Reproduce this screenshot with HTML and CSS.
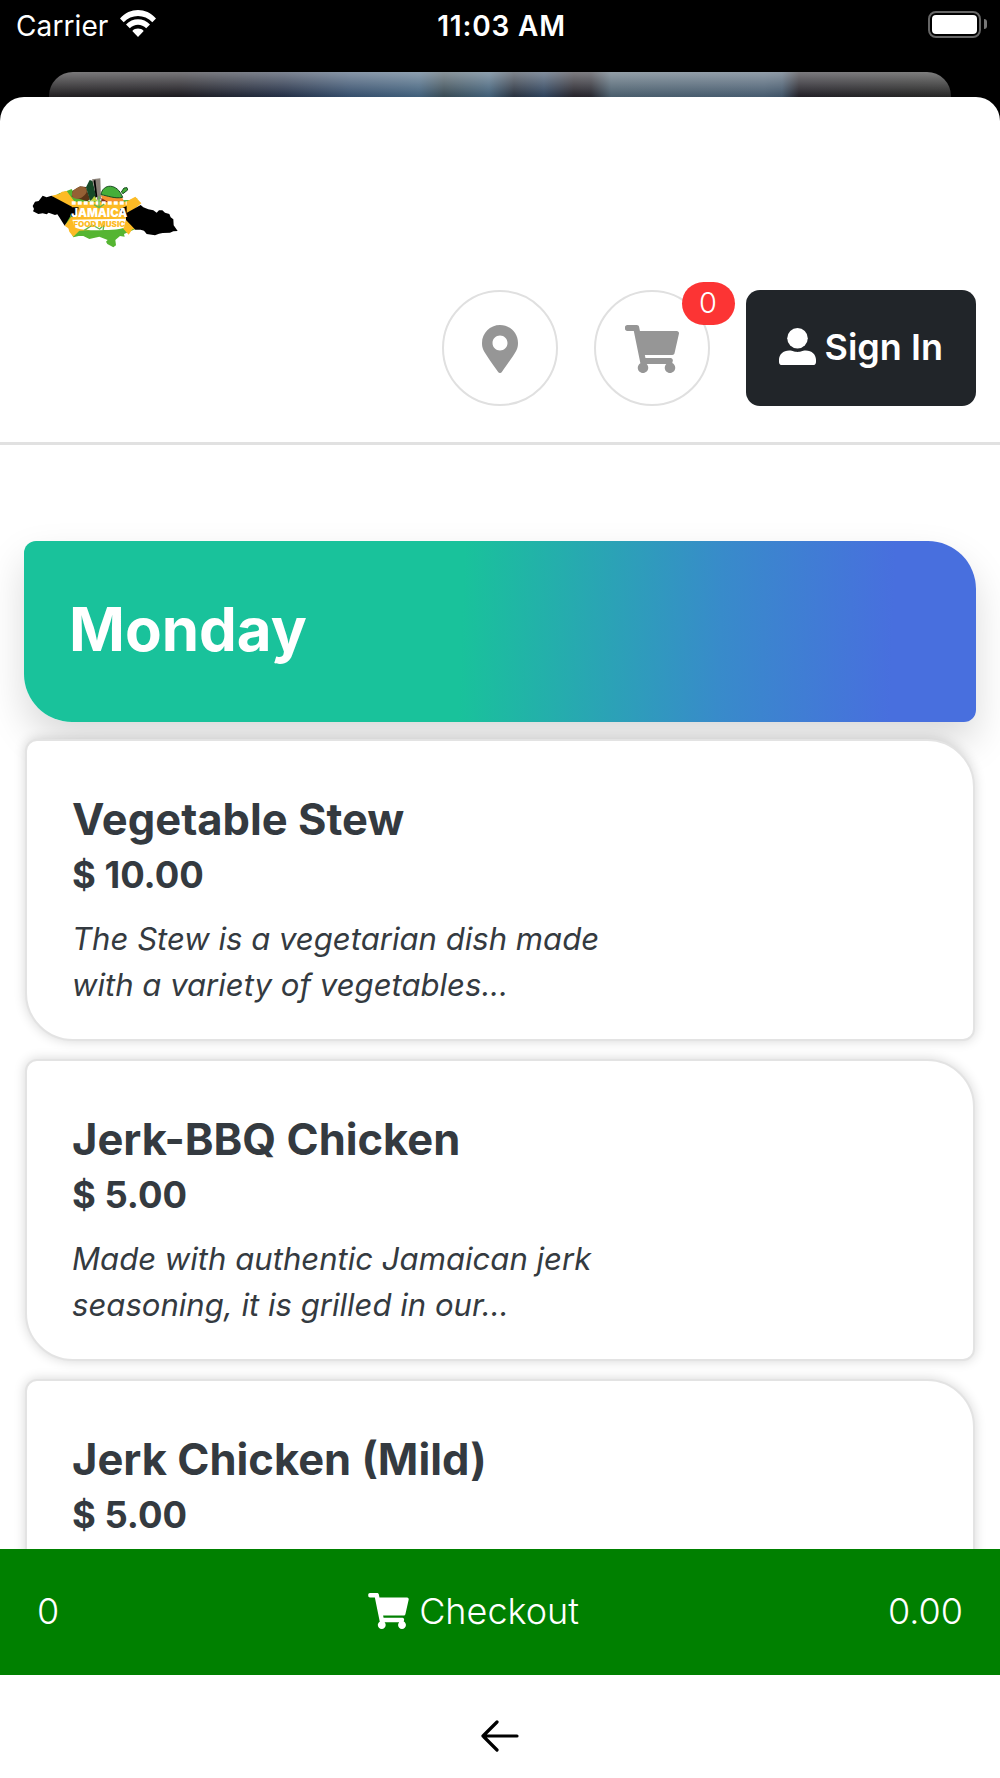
FILE: index.html
```html
<!DOCTYPE html>
<html lang="en"><head>

<meta charset="utf-8">
<title>Monday Menu</title>

<link rel="stylesheet" href="styles.css">

</head><body>

<!-- shared cart icon -->
<svg class="defs" width="0" height="0">
  <symbol id="cart" viewBox="0 0 576 512">
    <path d="M528.1 301.3l47.3-208C578.800 78.300 567.400 64 552 64H159.200l-9.200-44.800C147.800 8 137.900 0 126.500 0H24C10.700 0 0 10.700 0 24v16c0 13.300 10.700 24 24 24h69.900l70.200 343.400C147.300 417.100 136 435.200 136 456c0 30.900 25.100 56 56 56s56-25.100 56-56c0-15.700-6.400-29.800-16.800-40h209.600C430.400 426.200 424 440.300 424 456c0 30.900 25.100 56 56 56s56-25.100 56-56c0-22.200-12.900-41.300-31.600-50.400l5.500-24.300c3.400-15-8-29.300-23.400-29.300H218.100l-6.500-32h293.100c11.200 0 20.900-7.800 23.400-18.700z"/>
  </symbol>
</svg>

<div class="status">
  <div class="carrier">
    <span>Carrier</span>
    <svg class="wifi" viewBox="0 0 36 27">
      <path d="M0 8.500C10-2.800 26-2.800 36 8.500L32.300 12.300C24.500 4 11.500 4 3.700 12.300Z"/>
      <path d="M6 14.500C12.500 7.500 23.500 7.500 30 14.500L26.200 18.300C21.700 13.600 14.300 13.600 9.800 18.300Z"/>
      <path d="M12.300 21C15.200 17.800 20.800 17.800 23.700 21L18 27Z"/>
    </svg>
  </div>
  <div class="time">11:03 AM</div>
  <div class="power">
    <div class="battery"></div>
    <div class="battery-cap"></div>
  </div>
</div>

<div class="behind"></div>

<div class="sheet">
  <header>
    <svg class="logo" viewBox="30 45 450 225">
      <path class="green" d="M97 112L118 100L140 93L155 87L162 100L205 122L330 120L352 115L340 150L345 208L312 222L314 230L300 228L286 240L288 256L280 262L262 252L258 245L263 240L238 230L208 237L190 228L176 228L160 232L148 208Z"/>
      <path class="gold" d="M95 107L118 102L126 95L140 93L164 125L318 125L346 110L364 130L322 165L353 207L337 208L326 224L308 204L178 212L160 230L148 215L145 205L134 197L158 165Z"/>
      <path d="M38 138L45 125L56 123L68 107L80 112L94 107L156 140L150 170L134 197L118 172L112 163L105 165L86 158L80 163L68 160L55 162L39 154L42 147Z"/>
      <path d="M362 135L370 142L385 148L400 151L410 158L417 151L427 151L435 158L448 162L452 172L460 178L461 196L473 213L460 214L450 218L428 219L417 221L405 226L380 222L372 212L362 209L346 209L318 180L318 160Z"/>
      <path class="brown" d="M155 110L158 92L180 79L198 81L210 118L202 124Z"/>
      <ellipse class="drum" cx="178" cy="98" rx="24" ry="16" transform="rotate(-28 178 98)"/>
      <path class="dark-green" d="M198 82L209 60L218 63L229 112L210 122Z"/>
      <path class="stone" d="M216 58L241 55L243 118L232 120Z"/>
      <path d="M221 62L226 59L232 110L227 112Z"/>
      <path class="orange" d="M242 106L306 112L312 124L252 128Z"/>
      <path class="leaf" d="M243 104C248 70 292 68 308 112C285 117 262 107 243 104ZM304 96L312 84L321 83L323 90L309 101Z"/>
      <path class="red" d="M244 114L263 125L244 128Z"/>
      <path class="lime" d="M213 122L223 108L233 124Z"/>
      <path class="white" d="M157 179L318 176L312 202C308 213 170 215 163 200Z"/>
      <path class="white-line" d="M155 129H320"/>
      <path class="green-line" d="M193 211L217 195L239 207L252 195L249 211M237 109V143M222 134L237 143L253 132"/>
      <path d="M153 142L176 142L172 165L156 172L150 160ZM300 148L320 138V166L306 164Z"/>
      <text class="logo-name" x="154" y="172" textLength="168" lengthAdjust="spacingAndGlyphs">JAMAICA</text>
      <text class="logo-sub" x="160" y="200" textLength="156" lengthAdjust="spacingAndGlyphs">FOOD MUSIC</text>
    </svg>

    <div class="actions">
      <div class="round">
        <svg class="pin" viewBox="0 0 384 512"><path d="M172.300 501.700C27 291 0 269.400 0 192 0 86 86 0 192 0s192 86 192 192c0 77.400-27 99-172.300 309.700-9.500 13.800-29.900 13.800-39.400 0zM192 272c44.200 0 80-35.800 80-80s-35.800-80-80-80-80 35.800-80 80 35.800 80 80 80z"/></svg>
      </div>
      <div class="round">
        <svg class="cart"><use href="#cart"/></svg>
        <span class="badge">0</span>
      </div>
      <div class="signin">
        <svg class="user" viewBox="0 0 36 36"><circle cx="18" cy="10" r="10"/><path d="M10 22C14 22 14 23.300 18 23.300S22 22 26 22C32 22 36 26 36 31V33Q36 36 33 36H3Q0 36 0 33V31C0 26 4 22 10 22Z"/></svg>
        <span>Sign In</span>
      </div>
    </div>
  </header>

  <main>
    <h1>Monday</h1>

    <div class="item">
      <h2>Vegetable Stew</h2>
      <div class="price">$ 10.00</div>
      <p>The Stew is a vegetarian dish made<br>with a variety of vegetables...</p>
    </div>

    <div class="item">
      <h2>Jerk-BBQ Chicken</h2>
      <div class="price">$ 5.00</div>
      <p>Made with authentic Jamaican jerk<br>seasoning, it is grilled in our...</p>
    </div>

    <div class="item">
      <h2>Jerk Chicken (Mild)</h2>
      <div class="price">$ 5.00</div>
    </div>
  </main>

  <div class="checkout">
    <span>0</span>
    <div class="checkout-label">
      <svg class="cart"><use href="#cart"/></svg>
      <span>Checkout</span>
    </div>
    <span>0.00</span>
  </div>

  <footer>
    <svg class="back" viewBox="0 0 38 32"><path d="M36 16H2M16 2L2 16L16 30"/></svg>
  </footer>
</div>

</body></html>
```

FILE: styles.css
```css
* {
  box-sizing: border-box;
  }
body {
  display: flex;
  flex-direction: column;
  width: 1000px;
  height: 1778px;
  margin: 0;
  overflow: hidden;
  background: #000;
  color: #343a40;
  font-family: Inter, "Liberation Sans", sans-serif;
  }
svg {
  display: block;
  flex: none;
  }
.defs {
  position: absolute;
  }

/* status bar */
.status {
  display: grid;
  grid-template-columns: 1fr auto 1fr;
  flex: none;
  height: 72px;
  padding: 8px 13px 0 16px;
  color: #fff;
  font-size: 28px;
  line-height: 36px;
  }
.carrier {
  display: flex;
  gap: 12px;
  letter-spacing: .1px;
  }
.wifi {
  width: 36px;
  height: 27px;
  margin-top: 2px;
  fill: #fff;
  }
.time {
  font-weight: 600;
  letter-spacing: .8px;
  }
.power {
  display: flex;
  justify-content: flex-end;
  gap: 3px;
  margin-top: 3px;
  }
.battery {
  width: 53px;
  height: 27px;
  padding: 2px;
  border: 2px solid #666;
  border-radius: 8px;
  }
.battery::before {
  content: "";
  display: block;
  width: 45px;
  height: 19px;
  border-radius: 4px;
  background: #fff;
  }
.battery-cap {
  width: 3px;
  height: 10px;
  margin-top: 8px;
  border-radius: 0 5px 5px 0;
  background: #777;
  }

/* edge of the page lying under the sheet */
.behind {
  flex: none;
  height: 49px;
  margin: 0 49px -24px;
  border-radius: 24px 24px 0 0;
  background:
    linear-gradient(rgba(255, 255, 255, .42), rgba(255, 255, 255, .03) 24px),
    linear-gradient(90deg, #1c1a1c 0, #17151a 130px, #1f2b42 235px, #314a68 300px, #3c5c78 370px, #344650 395px, #3c5b74 440px, #242d3a 465px, #293e58 495px, #211f26 525px, #22222a 542px, #465a69 562px, #43586c 715px, #3c5064 733px, #1d1b22 750px, #202020 860px, #222 100%);
  }

.sheet {
  display: flex;
  flex: 1;
  flex-direction: column;
  min-height: 0;
  border-radius: 24px 24px 0 0;
  background: #fff;
  z-index: 1;
  }
header {
  flex: none;
  height: 348px;
  padding: 78px 24px 0 30px;
  border-bottom: 3px solid #e1e1e1;
  }
.logo {
  width: 150px;
  height: 75px;
  }
.green { fill: #55b532; }
.gold { fill: #fdbb25; }
.brown { fill: #5b3517; }
.drum { fill: #956034; }
.dark-green { fill: #164a28; }
.stone { fill: #8a8178; }
.leaf { fill: #45ae39; stroke: #174a20; stroke-width: 3; }
.orange { fill: #f5922f; }
.red { fill: #81291f; }
.lime { fill: #bdd339; }
.white { fill: #fff; }
.white-line { fill: none; stroke: #fff; stroke-width: 11; stroke-dasharray: 12 6; }
.green-line { fill: none; stroke: #65b94d; stroke-width: 4; }
.logo-name {
  fill: #fff;
  font-size: 36px;
  font-weight: 900;
  }
.logo-sub {
  fill: #fdbb25;
  font-size: 22px;
  font-weight: 900;
  }

.actions {
  display: flex;
  justify-content: flex-end;
  gap: 36px;
  margin-top: 40px;
  }
.round {
  position: relative;
  display: flex;
  align-items: center;
  justify-content: center;
  width: 116px;
  height: 116px;
  border: 2px solid #e0e0e0;
  border-radius: 50%;
  fill: #969696;
  }
.pin {
  width: 36px;
  height: 48px;
  margin-top: 2px;
  }
.cart {
  width: 54px;
  height: 48px;
  margin-top: 2px;
  }
.badge {
  position: absolute;
  top: -10px;
  right: -27px;
  width: 53px;
  height: 43px;
  border-radius: 22px;
  background: #fc3434;
  color: #fff;
  font-size: 29px;
  font-weight: 350;
  line-height: 42px;
  text-align: center;
  }
.signin {
  display: flex;
  align-items: center;
  justify-content: center;
  gap: 9px;
  width: 230.500px;
  height: 116px;
  padding-bottom: 2px;
  border-radius: 14px;
  background: #212529;
  color: #fff;
  font-size: 36px;
  font-weight: 600;
  }
.user {
  width: 37px;
  height: 37px;
  margin-top: -1px;
  fill: #fff;
  }

/* menu */
main {
  flex: 1;
  min-height: 0;
  padding: 96px 24px 0;
  overflow: hidden;
  }
h1 {
  height: 181px;
  margin: 0 0 17px;
  padding: 0 45px;
  border-radius: 12px 48px 12px 48px;
  background: linear-gradient(92deg, #19c29b 46%, #388bca 73%, #486fde 91%);
  box-shadow: 0 19px 39px rgba(0, 0, 0, .15);
  color: #fff;
  font-size: 60px;
  line-height: 177px;
  }
.item {
  height: 302px;
  margin: 0 1px 18px;
  padding: 51px 45px 0;
  border: 2px solid #e3e3e3;
  border-radius: 12px 48px 12px 48px;
  background: #fff;
  box-shadow: 0 0 12px rgba(0, 0, 0, .16);
  }
h2 {
  margin: 0;
  font-size: 43.500px;
  line-height: 55px;
  }
.price {
  font-size: 36.400px;
  font-weight: 700;
  line-height: 57px;
  }
.item p {
  margin: 12px 0 0;
  font-size: 31.100px;
  font-style: italic;
  line-height: 46px;
  }

.checkout {
  display: flex;
  flex: none;
  align-items: center;
  justify-content: space-between;
  height: 126px;
  padding: 0 37px 2px;
  background: green;
  color: #fff;
  fill: #fff;
  font-size: 36px;
  font-weight: 350;
  }
.checkout-label {
  display: flex;
  align-items: center;
  gap: 10px;
  }
.checkout .cart {
  width: 41px;
  height: 36px;
  margin-top: 0;
  }
footer {
  flex: none;
  height: 103px;
  padding-top: 45px;
  }
.back {
  width: 38px;
  height: 32px;
  margin: 0 auto;
  fill: none;
  stroke: #000;
  stroke-width: 3.200;
  stroke-linecap: round;
  stroke-linejoin: round;
  }
```
